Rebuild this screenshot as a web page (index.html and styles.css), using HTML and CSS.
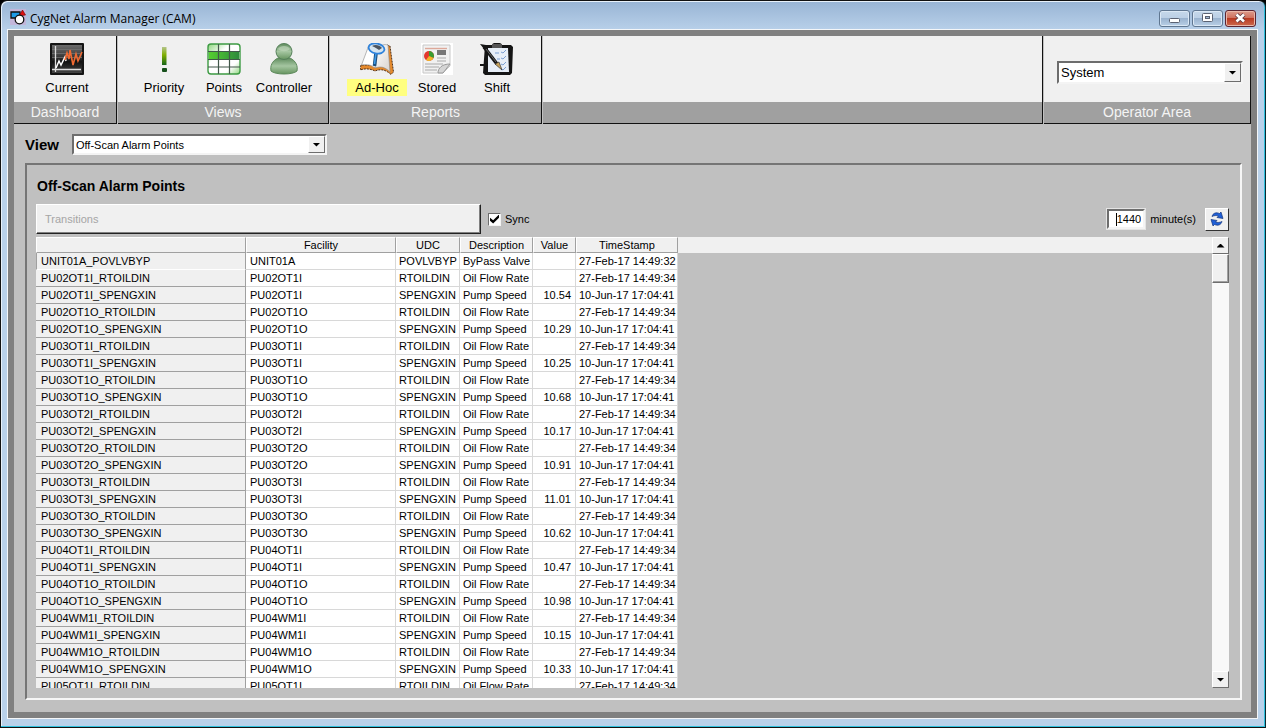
FILE: index.html
```html
<!DOCTYPE html>
<html lang="en">
<head>
<meta charset="utf-8">
<title>CygNet Alarm Manager (CAM)</title>
<link rel="stylesheet" href="styles.css">
</head>
<body>
<div class="window">
  <header class="titlebar">
    <svg class="app-icon" viewBox="0 0 16 16" aria-hidden="true">
      <rect width="16" height="16" fill="#c3b6da"/>
      <path d="M1 3h9v6H1z" fill="#1c9be8" stroke="#111" stroke-width="1.3"/>
      <path d="M9 7l3.500-6L15.500 6z" fill="#e01010" stroke="#600" stroke-width=".6"/>
      <circle cx="9.500" cy="10.500" r="4.300" fill="#fff" stroke="#111" stroke-width="1.300"/>
    </svg>
    <h1 class="title">CygNet Alarm Manager (CAM)</h1>
    <div class="window-buttons">
      <button class="win-btn" type="button" aria-label="Minimize"><svg viewBox="0 0 28 14"><rect x="9.500" y="7.500" width="10" height="4" rx="1" fill="#fff" stroke="#5b6272"/></svg></button>
      <button class="win-btn" type="button" aria-label="Maximize"><svg viewBox="0 0 28 14"><rect x="9.500" y="2.500" width="10" height="8" rx="1" fill="#fff" stroke="#5b6272"/><rect x="12.500" y="5.500" width="4" height="2" fill="#9fb6d2" stroke="#5b6272"/></svg></button>
      <button class="win-btn close" type="button" aria-label="Close"><svg viewBox="0 0 28 14"><path d="M10.500 3.500l7.500 7M18 3.500l-7.500 7" stroke="#5c3a42" stroke-width="4.400"/><path d="M10.500 3.500l7.500 7M18 3.500l-7.500 7" stroke="#fff" stroke-width="2.600"/></svg></button>
    </div>
  </header>

  <main class="client">
    <nav class="toolbar" aria-label="Main">
      <section class="group dashboard">
        <div class="tools">
          <button class="tool" type="button">
            <svg viewBox="0 0 34 32" aria-hidden="true">
              <defs><linearGradient id="dark" x1="0" y1="0" x2="0" y2="1"><stop offset="0" stop-color="#6b6b6b"/><stop offset=".4" stop-color="#3c3c3c"/><stop offset=".6" stop-color="#111"/><stop offset="1" stop-color="#444"/></linearGradient></defs>
              <rect width="34" height="32" rx="1" fill="#151515"/>
              <rect x="2" y="2" width="30" height="28" fill="url(#dark)"/>
              <path d="M2 6.500h30M2 10.500h30M2 14.500h30" stroke="#777" stroke-width=".7"/>
              <path d="M5.500 3v26M2 26.500h29" stroke="#ddd" stroke-width="1.300"/>
              <path d="M6 25l3-7 2 4 4-8 1 4" fill="none" stroke="#fff" stroke-width="1.500"/>
              <path d="M15 17l2-7 2 6 1-9 3 15 3-11 2 7 4-9" fill="none" stroke="#ef6a32" stroke-width="1.600"/>
            </svg>
            <span class="tool-label">Current</span>
          </button>
        </div>
        <h2 class="caption">Dashboard</h2>
      </section>

      <section class="group views">
        <div class="tools">
          <button class="tool" type="button">
            <svg viewBox="0 0 34 32" aria-hidden="true">
              <defs><linearGradient id="bang" x1="0" y1="0" x2="0" y2="1"><stop offset="0" stop-color="#b4c48a"/><stop offset=".45" stop-color="#7fae00"/><stop offset="1" stop-color="#17651a"/></linearGradient></defs>
              <path d="M15 4h4.500v18H15z" fill="url(#bang)"/><rect x="15" y="25" width="5" height="4" rx="1" fill="#17501c"/>
            </svg>
            <span class="tool-label">Priority</span>
          </button>
          <button class="tool" type="button">
            <svg viewBox="0 0 34 32" aria-hidden="true">
              <defs><linearGradient id="row" x1="0" y1="0" x2="1" y2="0"><stop offset="0" stop-color="#55cf30"/><stop offset="1" stop-color="#2e8a3c"/></linearGradient><linearGradient id="sheet" x1="0" y1="0" x2="1" y2="1"><stop offset="0" stop-color="#8ed67e"/><stop offset=".35" stop-color="#fff"/><stop offset=".75" stop-color="#fff"/><stop offset="1" stop-color="#8ed67e"/></linearGradient></defs>
              <rect x="1" y="1" width="32" height="30" rx="3" fill="url(#sheet)" stroke="#3d9b43" stroke-width="1.400"/>
              <rect x="2" y="9" width="30" height="7" fill="url(#row)"/>
              <path d="M11.500 1v30M22.500 1v30M1 8.500h32M1 16.500h32M1 24h32" stroke="#42574a" stroke-width="1.200"/>
            </svg>
            <span class="tool-label">Points</span>
          </button>
          <button class="tool" type="button">
            <svg viewBox="0 0 34 32" aria-hidden="true">
              <defs><linearGradient id="person" x1="0" y1="0" x2="0" y2="1"><stop offset="0" stop-color="#5f8b5d"/><stop offset=".5" stop-color="#a5c6a1"/><stop offset="1" stop-color="#66945f"/></linearGradient></defs>
              <path d="M11 15C5 18 3 23 4 28c4 4 22 4 26 0 1-5-1-10-7-13z" fill="url(#person)" stroke="#5e8a5c"/>
              <ellipse cx="17" cy="8.500" rx="8" ry="8" fill="url(#person)" stroke="#55805a"/>
              <path d="M11 6c2-4 10-4 12 0-3 3-9 3-12 0z" fill="#c5dbc0" opacity=".6"/>
            </svg>
            <span class="tool-label">Controller</span>
          </button>
        </div>
        <h2 class="caption">Views</h2>
      </section>

      <section class="group reports">
        <div class="tools">
          <button class="tool active" type="button">
            <svg viewBox="0 0 34 32" aria-hidden="true">
              <defs><linearGradient id="page" x1="0" y1="0" x2="1" y2="1"><stop offset="0" stop-color="#fff"/><stop offset="1" stop-color="#d9d3cd"/></linearGradient></defs>
              <path d="M1 22l-1 5c6-2 11-1 15 1 5-2 10-2 16 3.500l2.500-2.500L30 3l-3-1v20z" fill="#e58a2d" stroke="#3d2413" stroke-width=".9" stroke-dasharray="2 1"/>
              <path d="M9 2L1.500 22c6-1 10 0 13.500 3l3-20C15 3 12 1.500 9 2z" fill="#fff" stroke="#888" stroke-width=".6"/>
              <path d="M18 5l-3 20c6-2 10-1 15 4L28 2c-4-1-7 0-10 3z" fill="url(#page)" stroke="#888" stroke-width=".6"/>
              <path d="M16 10l-1.500 13" stroke="#1d5080" stroke-width="3.600"/><path d="M16 10l-1.500 11" stroke="#3f9bea" stroke-width="1.600"/>
              <ellipse cx="16.500" cy="5.500" rx="8" ry="5" fill="#d5e4ef" stroke="#2f83dc" stroke-width="1.800" transform="rotate(12 16.500 5.500)"/>
              <path d="M12 3c3-2 8-1 10 2l-3 2c-2-1-4-3-7-4z" fill="#4c5560"/>
            </svg>
            <span class="tool-label">Ad-Hoc</span>
          </button>
          <button class="tool" type="button">
            <svg viewBox="0 0 34 32" aria-hidden="true">
              <path d="M1 0h32v32H1z" fill="#fff"/><path d="M3 2h27v21l-7 7H3z" fill="#f1f1f1" stroke="#c8c8c8"/>
              <path d="M5 5.500h22" stroke="#dda899" stroke-width="1.400"/>
              <path d="M17 7h9v5h-9z" fill="#777"/><path d="M17 15h9M17 18h9M5 21h18M5 24h14M5 27h12" stroke="#aaa" stroke-width="1.200"/>
              <circle cx="9" cy="13" r="5" fill="#e3382e"/><path d="M9 13V8a5 5 0 014.500 7z" fill="#389d31"/><path d="M9 13l4.500 2A5 5 0 016 17z" fill="#f0b52a"/>
              <path d="M18 30c0-5 4-9 12-9l-7 9z" fill="#d5d5d5" stroke="#999"/>
            </svg>
            <span class="tool-label">Stored</span>
          </button>
          <button class="tool" type="button">
            <svg viewBox="0 0 34 32" aria-hidden="true">
              <path d="M5 2h7c0-3 10-3 10 0h9l2 2-1 26-2 2H5l-2-2z" fill="#151515"/>
              <path d="M8 5h20l1 24H8z" fill="#e7eef7"/>
              <path d="M12 1h10v4H12z" fill="#555"/>
              <path d="M21 9l2 1 3-3M21 15l2 1 3-3M21 21l2 1 3-3M21 26l2 1 3-3M15 10h4M17 16h3" fill="none" stroke="#7b9fd3"/>
              <path d="M4 4l13 17" stroke="#151515" stroke-width="3.500"/><path d="M6 6l10 13" stroke="#666"/>
              <path d="M15 21l4-2 3 8z" fill="#c8a35c" stroke="#333" stroke-width=".7"/>
              <path d="M0 1l6 1-2 4zM0 21h4v2H0z" fill="#151515"/>
            </svg>
            <span class="tool-label">Shift</span>
          </button>
        </div>
        <h2 class="caption">Reports</h2>
      </section>

      <div class="group spacer"><div class="tools"></div><div class="caption"></div></div>

      <section class="group operator">
        <div class="tools">
          <div class="combo large">
            <select aria-label="Operator area"><option>System</option></select>
            <span class="combo-arrow"></span>
          </div>
        </div>
        <h2 class="caption">Operator Area</h2>
      </section>
    </nav>

    <div class="view-row">
      <label class="view-label" for="view">View</label>
      <div class="combo">
        <select id="view"><option>Off-Scan Alarm Points</option></select>
        <span class="combo-arrow"></span>
      </div>
    </div>

    <section class="panel">
      <h2 class="panel-title">Off-Scan Alarm Points</h2>
      <div class="controls">
        <button class="transitions" type="button" disabled>Transitions</button>
        <label class="sync"><input type="checkbox" checked>Sync</label>
        <div class="interval">
          <span class="number-box"><input id="minutes" type="text" value="1440"><span class="caret"></span></span>
          <label for="minutes">minute(s)</label>
        </div>
        <button class="refresh" type="button" aria-label="Refresh">
          <svg viewBox="0 0 16 16"><g fill="#1f5fd8" stroke="#12337a" stroke-width=".7"><path d="M3 5.500C4 2 7 1 10.500 2.500L12 1l2 6.500-6-1L9.500 5C7.500 4.200 5 4.500 3 5.500z"/><path d="M13 10.500c-1 3.500-4 4.500-7.500 3L4 15 2 8.500l6 1L6.500 11c2 .8 4.500.5 6.500-.5z"/></g></svg>
        </button>
      </div>

      <div class="grid">
        <div class="grid-body">
          <table>
            <colgroup><col class="c-name"><col class="c-facility"><col class="c-udc"><col class="c-desc"><col class="c-value"><col class="c-time"></colgroup>
            <thead><tr><th scope="col"></th><th scope="col">Facility</th><th scope="col">UDC</th><th scope="col">Description</th><th scope="col">Value</th><th scope="col">TimeStamp</th></tr></thead>
            <tbody>
              <tr class="current"><th scope="row">UNIT01A_POVLVBYP</th><td>UNIT01A</td><td>POVLVBYP</td><td>ByPass Valve</td><td></td><td>27-Feb-17 14:49:32</td></tr>
              <tr><th scope="row">PU02OT1I_RTOILDIN</th><td>PU02OT1I</td><td>RTOILDIN</td><td>Oil Flow Rate</td><td></td><td>27-Feb-17 14:49:34</td></tr>
              <tr><th scope="row">PU02OT1I_SPENGXIN</th><td>PU02OT1I</td><td>SPENGXIN</td><td>Pump Speed</td><td>10.54</td><td>10-Jun-17 17:04:41</td></tr>
              <tr><th scope="row">PU02OT1O_RTOILDIN</th><td>PU02OT1O</td><td>RTOILDIN</td><td>Oil Flow Rate</td><td></td><td>27-Feb-17 14:49:34</td></tr>
              <tr><th scope="row">PU02OT1O_SPENGXIN</th><td>PU02OT1O</td><td>SPENGXIN</td><td>Pump Speed</td><td>10.29</td><td>10-Jun-17 17:04:41</td></tr>
              <tr><th scope="row">PU03OT1I_RTOILDIN</th><td>PU03OT1I</td><td>RTOILDIN</td><td>Oil Flow Rate</td><td></td><td>27-Feb-17 14:49:34</td></tr>
              <tr><th scope="row">PU03OT1I_SPENGXIN</th><td>PU03OT1I</td><td>SPENGXIN</td><td>Pump Speed</td><td>10.25</td><td>10-Jun-17 17:04:41</td></tr>
              <tr><th scope="row">PU03OT1O_RTOILDIN</th><td>PU03OT1O</td><td>RTOILDIN</td><td>Oil Flow Rate</td><td></td><td>27-Feb-17 14:49:34</td></tr>
              <tr><th scope="row">PU03OT1O_SPENGXIN</th><td>PU03OT1O</td><td>SPENGXIN</td><td>Pump Speed</td><td>10.68</td><td>10-Jun-17 17:04:41</td></tr>
              <tr><th scope="row">PU03OT2I_RTOILDIN</th><td>PU03OT2I</td><td>RTOILDIN</td><td>Oil Flow Rate</td><td></td><td>27-Feb-17 14:49:34</td></tr>
              <tr><th scope="row">PU03OT2I_SPENGXIN</th><td>PU03OT2I</td><td>SPENGXIN</td><td>Pump Speed</td><td>10.17</td><td>10-Jun-17 17:04:41</td></tr>
              <tr><th scope="row">PU03OT2O_RTOILDIN</th><td>PU03OT2O</td><td>RTOILDIN</td><td>Oil Flow Rate</td><td></td><td>27-Feb-17 14:49:34</td></tr>
              <tr><th scope="row">PU03OT2O_SPENGXIN</th><td>PU03OT2O</td><td>SPENGXIN</td><td>Pump Speed</td><td>10.91</td><td>10-Jun-17 17:04:41</td></tr>
              <tr><th scope="row">PU03OT3I_RTOILDIN</th><td>PU03OT3I</td><td>RTOILDIN</td><td>Oil Flow Rate</td><td></td><td>27-Feb-17 14:49:34</td></tr>
              <tr><th scope="row">PU03OT3I_SPENGXIN</th><td>PU03OT3I</td><td>SPENGXIN</td><td>Pump Speed</td><td>11.01</td><td>10-Jun-17 17:04:41</td></tr>
              <tr><th scope="row">PU03OT3O_RTOILDIN</th><td>PU03OT3O</td><td>RTOILDIN</td><td>Oil Flow Rate</td><td></td><td>27-Feb-17 14:49:34</td></tr>
              <tr><th scope="row">PU03OT3O_SPENGXIN</th><td>PU03OT3O</td><td>SPENGXIN</td><td>Pump Speed</td><td>10.62</td><td>10-Jun-17 17:04:41</td></tr>
              <tr><th scope="row">PU04OT1I_RTOILDIN</th><td>PU04OT1I</td><td>RTOILDIN</td><td>Oil Flow Rate</td><td></td><td>27-Feb-17 14:49:34</td></tr>
              <tr><th scope="row">PU04OT1I_SPENGXIN</th><td>PU04OT1I</td><td>SPENGXIN</td><td>Pump Speed</td><td>10.47</td><td>10-Jun-17 17:04:41</td></tr>
              <tr><th scope="row">PU04OT1O_RTOILDIN</th><td>PU04OT1O</td><td>RTOILDIN</td><td>Oil Flow Rate</td><td></td><td>27-Feb-17 14:49:34</td></tr>
              <tr><th scope="row">PU04OT1O_SPENGXIN</th><td>PU04OT1O</td><td>SPENGXIN</td><td>Pump Speed</td><td>10.98</td><td>10-Jun-17 17:04:41</td></tr>
              <tr><th scope="row">PU04WM1I_RTOILDIN</th><td>PU04WM1I</td><td>RTOILDIN</td><td>Oil Flow Rate</td><td></td><td>27-Feb-17 14:49:34</td></tr>
              <tr><th scope="row">PU04WM1I_SPENGXIN</th><td>PU04WM1I</td><td>SPENGXIN</td><td>Pump Speed</td><td>10.15</td><td>10-Jun-17 17:04:41</td></tr>
              <tr><th scope="row">PU04WM1O_RTOILDIN</th><td>PU04WM1O</td><td>RTOILDIN</td><td>Oil Flow Rate</td><td></td><td>27-Feb-17 14:49:34</td></tr>
              <tr><th scope="row">PU04WM1O_SPENGXIN</th><td>PU04WM1O</td><td>SPENGXIN</td><td>Pump Speed</td><td>10.33</td><td>10-Jun-17 17:04:41</td></tr>
              <tr><th scope="row">PU05OT1I_RTOILDIN</th><td>PU05OT1I</td><td>RTOILDIN</td><td>Oil Flow Rate</td><td></td><td>27-Feb-17 14:49:34</td></tr>
            </tbody>
          </table>
          <div class="header-fill"></div>
        </div>
        <div class="scrollbar">
          <button class="scroll-btn up" type="button" aria-label="Scroll up"></button>
          <div class="track"><div class="thumb"></div></div>
          <button class="scroll-btn down" type="button" aria-label="Scroll down"></button>
        </div>
      </div>
    </section>
  </main>
</div>
</body>
</html>
```
FILE: styles.css
```css
* { box-sizing: border-box; }

body {
  margin: 0;
  background: #000;
  color: #000;
  font: 11px/16px "Liberation Sans", Arial, sans-serif;
}

h1, h2 { margin: 0; font-weight: normal; }
button, input, select { font: inherit; color: inherit; margin: 0; padding: 0; border-radius: 0; }
svg { display: block; }

.window {
  display: flex;
  flex-direction: column;
  height: 100vh;
  padding: 0 8px 9px 7px;
  border: 1px solid #111;
  border-right-color: #0b2a33;
  border-radius: 7px 7px 0 0;
  background: linear-gradient(#98b4d4, #b9d1ea 30px);
  box-shadow: inset -1px -1px #2fc0dd, inset 1px 1px #e8f1fa;
}

/* Title bar */
.titlebar {
  display: flex;
  flex: none;
  align-items: center;
  gap: 4px;
  height: 29px;
  padding: 7px 1px 0 2px;
}
.app-icon { width: 16px; height: 16px; margin-bottom: 4px; }
.title {
  flex: 1;
  font: 12px/18px "Open Sans", "Noto Sans", sans-serif;
}
.window-buttons { display: flex; gap: 2px; margin-bottom: 2px; }
.win-btn {
  width: 31px;
  height: 17px;
  border: 1px solid #5f7690;
  border-radius: 3px;
  background: linear-gradient(#c6d8ea, #bbcfe5 48%, #9ab3cf 50%, #b9cfe6);
  box-shadow: inset 0 0 0 1px #dbe8f5;
}
.win-btn svg { width: 28px; height: 14px; }
.win-btn.close {
  border-color: #5c2430;
  background: linear-gradient(#dd9c8c, #cf6f5c 48%, #b93a22 50%, #cc6a4e);
  box-shadow: inset 0 0 0 1px #e9b7a9;
}

/* Client area */
.client {
  display: flex;
  flex: 1;
  flex-direction: column;
  min-height: 0;
  border: 6px solid #808080;
  background: #c0c0c0;
  box-shadow: 0 0 0 1px #f4f6f8;
}

/* Toolbar */
.toolbar { display: flex; flex: none; gap: 1px; background: #c0c0c0; }
.group {
  border-right: 1px solid #111;
  border-bottom: 1px solid #111;
  background: #f0f0f0;
}
.tools { display: flex; height: 66px; padding: 7px 0 0 16px; }
.dashboard { flex: 0 0 103px; }
.dashboard .tools { padding-left: 23px; }
.views { flex: 0 0 211px; }
.reports { flex: 0 0 212px; }
.reports .tools { padding-left: 17px; }
.spacer { flex: 1; }
.operator { flex: 0 0 207px; }
.operator .tools { padding: 25px 7px 0 13px; }
.caption {
  height: 21px;
  background: #a0a0a0;
  color: #f4f4f4;
  font-size: 14px;
  line-height: 21px;
  text-align: center;
}
.tool {
  display: flex;
  flex-direction: column;
  align-items: center;
  gap: 4px;
  width: 60px;
  border: 0;
  background: none;
}
.tool svg { width: 34px; height: 32px; }
.tool-label { width: 60px; font-size: 13px; line-height: 17px; }
.tool.active .tool-label { background: #ffff80; }

/* Drop-down lists */
.combo {
  position: relative;
  flex: 1;
  height: 21px;
  border: 2px solid;
  border-color: #6d6d6d #f4f4f4 #f4f4f4 #6d6d6d;
}
.combo select {
  display: block;
  width: 100%;
  height: 100%;
  padding: 0 20px 0 2px;
  border: 0;
  outline: 0;
  appearance: none;
  background: #fff;
}
.combo.large { height: 23px; }
.combo.large select { font-size: 13px; }
.combo-arrow {
  position: absolute;
  inset: 0 0 0 auto;
  display: flex;
  width: 17px;
  border: 1px solid;
  border-color: #fff #6d6d6d #6d6d6d #fff;
  background: #f0f0f0;
  pointer-events: none;
}
.combo-arrow::before, .scroll-btn::before {
  content: "";
  display: block;
  width: 8px;
  height: 4px;
  margin: auto;
  background: #000;
  clip-path: polygon(0 0, 100% 0, 50% 100%);
}

.view-row { display: flex; align-items: center; flex: none; gap: 13px; padding: 10px 11px 0; }
.view-row .combo { flex: 0 0 255px; }
.view-label { font-size: 15px; font-weight: bold; }

/* Report panel */
.panel {
  display: flex;
  flex: 1;
  flex-direction: column;
  min-height: 0;
  margin: 8px 9px 12px 11px;
  padding: 12px 11px 10px 9px;
  border: 2px solid;
  border-color: #757575 #f6f6f6 #f6f6f6 #757575;
}
.panel-title { padding-left: 1px; font-size: 14px; line-height: 18px; font-weight: bold; }
.controls { display: flex; flex: none; align-items: center; gap: 7px; padding: 9px 0 3px; }
.transitions {
  width: 445px;
  height: 30px;
  padding-left: 8px;
  border: 1px solid;
  border-color: #fff #222 #222 #fff;
  box-shadow: inset -1px -1px #808080;
  background: #f0f0f0;
  color: #a5a5a5;
  text-align: left;
}
.sync { display: flex; align-items: center; gap: 4px; }
.sync input {
  width: 13px;
  height: 13px;
  border: 1px solid;
  border-color: #6d6d6d #f4f4f4 #f4f4f4 #6d6d6d;
  appearance: none;
  background: #fff;
}
.sync input:checked::before {
  content: "";
  display: block;
  width: 9px;
  height: 9px;
  margin: 1px;
  background: #000;
  clip-path: polygon(0 35%, 35% 65%, 100% 0, 100% 35%, 35% 100%, 0 70%);
}
.interval { display: flex; align-items: center; gap: 5px; margin-left: auto; }
.number-box { position: relative; }
.number-box input {
  display: block;
  width: 38px;
  height: 20px;
  padding-right: 2px;
  border: 2px solid;
  border-color: #6d6d6d #f4f4f4 #f4f4f4 #6d6d6d;
  outline: 1px solid #e4e4e4;
  background: #fff;
  text-align: right;
}
.caret { position: absolute; top: 4px; left: 9px; width: 1px; height: 13px; background: #000; }
.refresh {
  display: grid;
  place-items: center;
  width: 24px;
  height: 23px;
  margin-left: 2px;
  border: 1px solid;
  border-color: #fff #333 #333 #fff;
  background: #f0f0f0;
}
.refresh svg { width: 16px; height: 16px; }

/* Data grid */
.grid { display: flex; flex: 1; min-height: 0; }
.grid-body { display: flex; flex: 1; align-items: flex-start; min-width: 0; overflow: hidden; }
.header-fill { flex: 1; height: 16px; background: #f0f0f0; }
table { flex: none; width: 642px; table-layout: fixed; border-collapse: separate; border-spacing: 0; background: #fff; }
.c-name { width: 210px; }
.c-facility { width: 150px; }
.c-udc { width: 64px; }
.c-desc { width: 73px; }
.c-value { width: 43px; }
.c-time { width: 102px; }
th, td { padding: 0; white-space: nowrap; font-weight: normal; }
thead th {
  height: 16px;
  border: 1px solid;
  border-color: #fff #a0a0a0 #a0a0a0 #fff;
  background: #f0f0f0;
  line-height: 14px;
}
tbody th {
  height: 17px;
  padding-left: 5px;
  border-right: 1px solid #a0a0a0;
  border-bottom: 1px solid #a0a0a0;
  background: #f0f0f0;
  text-align: left;
}
tbody .current th { padding-left: 4px; border-left: 1px solid #a0a0a0; border-bottom-color: #fff; }
td { padding-left: 3px; border-right: 1px solid #d8d8d8; border-bottom: 1px solid #d8d8d8; line-height: 16px; }
td:nth-child(2) { padding-left: 4px; }
td:nth-child(5) { padding: 0 4px 0 0; text-align: right; }

/* Scroll bar */
.scrollbar { display: flex; flex: 0 0 17px; flex-direction: column; }
.scroll-btn, .thumb {
  border: 1px solid;
  border-color: #fff #6d6d6d #6d6d6d #fff;
  background: #f0f0f0;
}
.scroll-btn { flex: 0 0 17px; width: 17px; }
.scroll-btn.up::before { clip-path: polygon(50% 0, 100% 100%, 0 100%); }
.track { flex: 1; background: #f8f8f8; }
.thumb { height: 29px; box-shadow: inset -1px -1px #a0a0a0; }
```
